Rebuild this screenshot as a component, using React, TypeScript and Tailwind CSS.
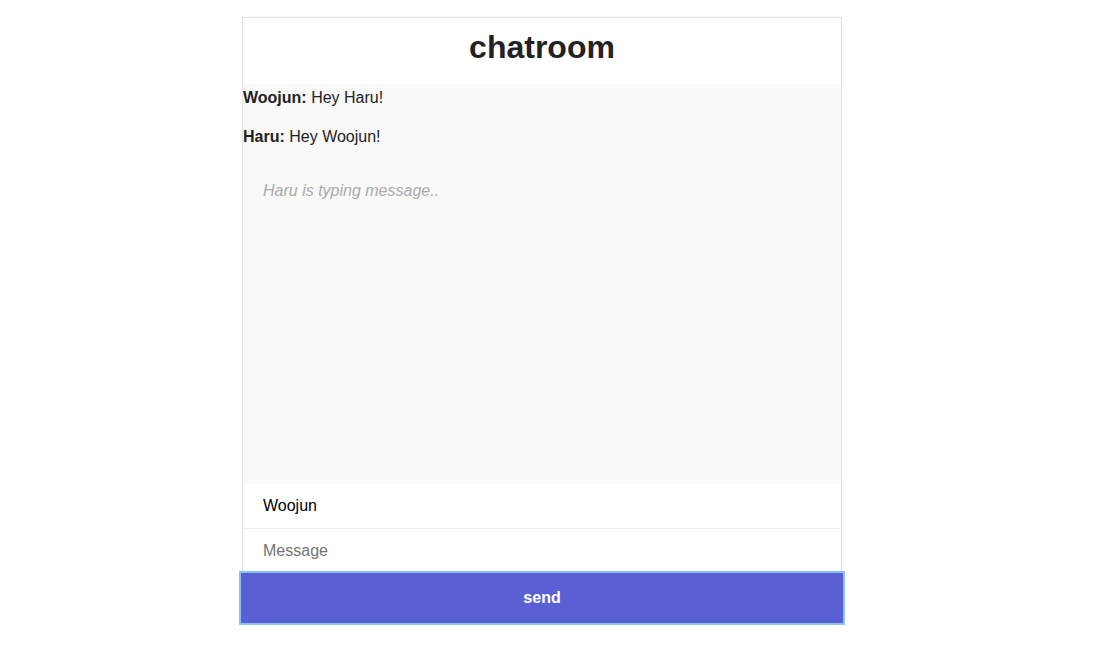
export default function App() {
  const messages = [
    { name: 'Woojun', text: 'Hey Haru!' },
    { name: 'Haru', text: 'Hey Woojun!' },
  ];

  return (
    <div className="min-h-screen bg-white pt-[17px] font-['Liberation_Sans',Arial,sans-serif]">
      <div className="w-[1084px]">
        <div className="mx-auto w-[600px] border border-[#e2e2e2]">
          {/* Title */}
          <div className="h-[66px] bg-white pt-[10px] text-center">
            <h1 className="text-[32px] leading-[38px] font-bold text-[#222]">chatroom</h1>
          </div>

          {/* Chat window */}
          <div className="h-[400px] overflow-auto bg-[#f9f9f9] pt-px text-[16px] text-[#222]">
            {messages.map((m) => (
              <p key={m.name} className="mb-[13px] leading-[26px]">
                <strong>{m.name}:</strong> {m.text}
              </p>
            ))}
            <p className="px-[20px] pt-[15px] leading-[26px] italic text-[#aaa]">
              Haru is typing message..
            </p>
          </div>

          {/* Inputs */}
          <input
            type="text"
            defaultValue="Woojun"
            className="block h-[45px] w-full border-b border-[#eee] bg-white px-[20px] text-[16px] text-black outline-none"
          />
          <input
            type="text"
            placeholder="Message"
            className="block h-[44px] w-full bg-white px-[20px] text-[16px] text-black outline-none placeholder:text-[#757575]"
          />
        </div>

        <div className="mx-auto -mt-px w-[602px]">
          <button className="block h-[50px] w-full bg-[#5b5fd4] text-[16px] font-bold text-white shadow-[0_0_0_2px_#8cc0f4]">
            send
          </button>
        </div>
      </div>
    </div>
  );
}
